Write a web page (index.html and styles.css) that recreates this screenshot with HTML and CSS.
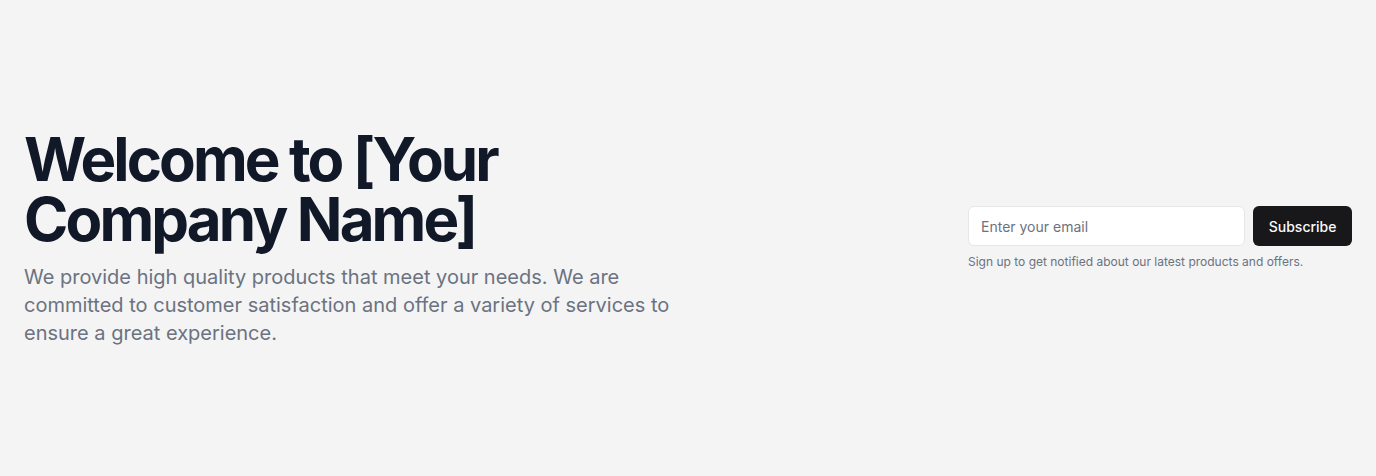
FILE: index.html
```html
<!DOCTYPE html>
<html lang="en">
<head>
<meta charset="utf-8">
<title>Welcome</title>
<link rel="stylesheet" href="styles.css">
</head>
<body>
<section class="hero">
  <div class="grid">
    <div class="intro">
      <h1 class="title">Welcome to [Your Company Name]</h1>
      <p class="lead">We provide high quality products that meet your needs. We are committed to customer satisfaction and offer a variety of services to ensure a great experience.</p>
    </div>
    <div class="signup">
      <form class="form">
        <input class="email" type="email" placeholder="Enter your email">
        <button class="btn" type="submit">Subscribe</button>
      </form>
      <p class="note">Sign up to get notified about our latest products and offers.</p>
    </div>
  </div>
</section>
</body>
</html>
```

FILE: styles.css
```css
* { box-sizing: border-box; }
html, body { margin: 0; padding: 0; }
body {
  background: #f4f4f4;
  font-family: Inter, "Noto Sans", sans-serif;
}
.hero {
  height: 476px;
  display: flex;
  align-items: center;
  padding: 0 24px;
}
.grid {
  width: 100%;
  display: grid;
  grid-template-columns: 1fr 1fr;
  gap: 24px;
  align-items: center;
}
.intro {
  display: flex;
  flex-direction: column;
  gap: 14px;
}
.title {
  margin: 0;
  font-size: 60px;
  line-height: 1;
  font-weight: 700;
  letter-spacing: -0.048em;
  color: #111827;
}
.lead {
  margin: 0;
  font-size: 20px;
  line-height: 28px;
  color: #6b7280;
}
.signup {
  justify-self: end;
  width: 384px;
  display: flex;
  flex-direction: column;
  gap: 8px;
}
.form {
  margin: 0;
  display: flex;
  gap: 8px;
}
.email {
  flex: 1;
  min-width: 0;
  height: 40px;
  border: 1px solid #e5e7eb;
  border-radius: 6px;
  background: #fff;
  padding: 0 12px;
  font-family: inherit;
  font-size: 14px;
  color: #111827;
  outline: none;
}
.email::placeholder { color: #6b7280; }
.btn {
  height: 40px;
  padding: 0 15.5px;
  border: none;
  border-radius: 6px;
  background: #18181b;
  color: #fafafa;
  font-family: inherit;
  font-size: 14px;
  font-weight: 500;
}
.note {
  margin: 0;
  font-size: 12px;
  line-height: 16px;
  color: #6b7280;
}
```
